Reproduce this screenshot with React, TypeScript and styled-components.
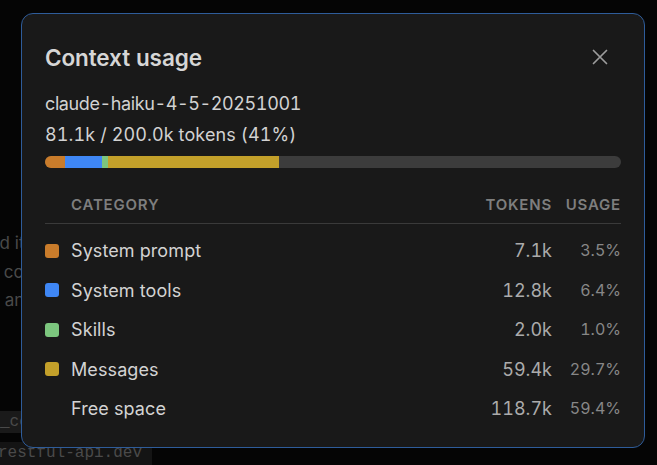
import React from "react";
import styled, { createGlobalStyle } from "styled-components";

const Global = createGlobalStyle`
  html, body { margin: 0; padding: 0; background: #050505; }
  body { overflow: hidden; font-family: Inter, "Noto Sans", sans-serif; -webkit-font-smoothing: antialiased; }
  #root { width: 657px; height: 465px; }
`;

const Page = styled.div`
  position: relative;
  width: 657px;
  height: 465px;
  overflow: hidden;
  background: #050505;
`;

const Backdrop = styled.div`
  display: flex;
  flex-direction: column;
  padding-top: 229px;
`;

const BgLine = styled.div<{ $shift: number }>`
  margin-left: ${(p) => p.$shift}px;
  font-size: 17px;
  line-height: 28.5px;
  color: #4a4a4a;
  white-space: nowrap;
`;

const CodeInline = styled.div`
  margin-top: 96px;
  width: 120px;
  height: 22px;
  background: #1a1a1a;
  font-family: "Liberation Mono", "DejaVu Sans Mono", monospace;
  font-size: 16px;
  line-height: 22px;
  color: #4a4a4a;
  white-space: nowrap;
`;

const CodeBlock = styled.div`
  margin-top: 9px;
  width: 152px;
  height: 30px;
  background: #141414;
  border-radius: 0 6px 6px 0;
  font-family: "Liberation Mono", "DejaVu Sans Mono", monospace;
  font-size: 16px;
  line-height: 22px;
  color: #4a4a4a;
  white-space: nowrap;
  overflow: hidden;
  text-indent: -2px;
`;

const Modal = styled.div`
  position: absolute;
  left: 21px;
  top: 13px;
  width: 624px;
  height: 435px;
  box-sizing: border-box;
  border: 1px solid #2e5c9a;
  border-radius: 12px;
  background: #191919;
  padding: 23px 23px 0 23px;
  display: flex;
  flex-direction: column;
  font-variant-numeric: tabular-nums;
`;

const Header = styled.div`
  display: flex;
  align-items: center;
  justify-content: space-between;
  height: 40px;
`;

const Title = styled.h2`
  margin: 0;
  font-size: 22.5px;
  font-weight: 600;
  color: #d6d6d6;
  letter-spacing: -0.1px;
`;

const CloseButton = styled.button`
  display: flex;
  align-items: center;
  justify-content: center;
  width: 24px;
  height: 24px;
  margin-right: 9px;
  padding: 0;
  border: none;
  background: transparent;
  color: #9c9c9c;
  cursor: pointer;
`;

const Info = styled.div`
  margin-top: 11px;
  display: flex;
  flex-direction: column;
`;

const InfoLine = styled.div<{ $tight?: boolean }>`
  font-size: 18px;
  line-height: 31px;
  color: #d2d2d2;
  letter-spacing: ${(p) => (p.$tight ? "-0.4px" : "0.1px")};
`;

const Bar = styled.div`
  margin-top: 6px;
  height: 12px;
  border-radius: 6px;
  background: #3c3c3c;
  display: flex;
  overflow: hidden;
`;

const Segment = styled.div<{ $color: string }>`
  height: 100%;
  background: ${(p) => p.$color};
`;

const Table = styled.div`
  margin-top: 27px;
  display: grid;
  grid-template-columns: 14px 1fr auto 57px;
  column-gap: 12px;
  align-items: center;
`;

const HeadCell = styled.div<{ $right?: boolean }>`
  font-size: 15px;
  font-weight: 600;
  letter-spacing: 0.8px;
  text-transform: uppercase;
  color: #7e7e7e;
  line-height: 20px;
  white-space: nowrap;
  text-align: ${(p) => (p.$right ? "right" : "left")};
`;

const Divider = styled.div`
  grid-column: 1 / -1;
  height: 1px;
  margin: 8px 0 7px;
  background: #3a3a3a;
`;

const Swatch = styled.div<{ $color?: string }>`
  width: 14px;
  height: 14px;
  border-radius: 3px;
  background: ${(p) => p.$color ?? "transparent"};
`;

const Label = styled.div`
  font-size: 18px;
  line-height: 39.5px;
  color: #d3d3d3;
  letter-spacing: 0.1px;
`;

const Tokens = styled.div`
  font-size: 18px;
  line-height: 39.5px;
  color: #ababab;
  text-align: right;
`;

const Usage = styled.div`
  font-size: 16px;
  line-height: 39.5px;
  color: #878787;
  text-align: right;
`;

const rows = [
  { name: "System prompt", tokens: "7.1k", usage: "3.5%", pct: 3.5, color: "#c97c2b" },
  { name: "System tools", tokens: "12.8k", usage: "6.4%", pct: 6.4, color: "#3f87f5" },
  { name: "Skills", tokens: "2.0k", usage: "1.0%", pct: 1.0, color: "#7cc67e" },
  { name: "Messages", tokens: "59.4k", usage: "29.7%", pct: 29.7, color: "#c3a02a" },
  { name: "Free space", tokens: "118.7k", usage: "59.4%", pct: 0, color: undefined },
];

export default function App() {
  return (
    <Page>
      <Global />
      <Backdrop>
        <BgLine $shift={-20}>and it</BgLine>
        <BgLine $shift={-1}>&nbsp;code</BgLine>
        <BgLine $shift={0}>&nbsp;and</BgLine>
        <CodeInline>_code</CodeInline>
        <CodeBlock>restful-api.dev</CodeBlock>
      </Backdrop>
      <Modal>
        <Header>
          <Title>Context usage</Title>
          <CloseButton aria-label="Close">
            <svg width="16" height="16" viewBox="0 0 16 16" fill="none" stroke="currentColor" strokeWidth="1.7" strokeLinecap="round">
              <path d="M1.5 1.5 L14.5 14.5 M14.5 1.5 L1.5 14.5" />
            </svg>
          </CloseButton>
        </Header>
        <Info>
          <InfoLine $tight>claude-haiku-4-5-20251001</InfoLine>
          <InfoLine>81.1k / 200.0k tokens (41%)</InfoLine>
        </Info>
        <Bar>
          {rows
            .filter((r) => r.color)
            .map((r) => (
              <Segment key={r.name} $color={r.color as string} style={{ width: `${r.pct}%` }} />
            ))}
        </Bar>
        <Table>
          <span />
          <HeadCell>Category</HeadCell>
          <HeadCell $right>Tokens</HeadCell>
          <HeadCell $right>Usage</HeadCell>
          <Divider />
          {rows.map((r) => (
            <React.Fragment key={r.name}>
              <Swatch $color={r.color} />
              <Label>{r.name}</Label>
              <Tokens>{r.tokens}</Tokens>
              <Usage>{r.usage}</Usage>
            </React.Fragment>
          ))}
        </Table>
      </Modal>
    </Page>
  );
}
